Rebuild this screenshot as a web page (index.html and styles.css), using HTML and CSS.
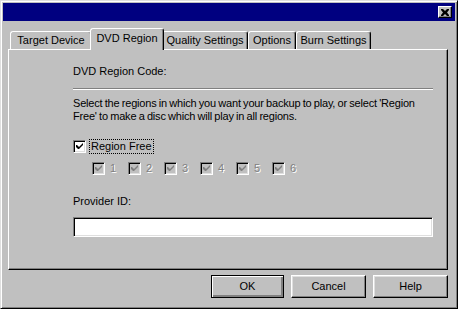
FILE: index.html
```html
<!DOCTYPE html>
<html lang="en">
<head>
    <meta charset="UTF-8">
    <title>DVD Region</title>
    <link rel="stylesheet" href="styles.css">
</head>
<body>
    <div class="window">
        <div class="titlebar">
            <button class="close" type="button" aria-label="Close">
                <svg width="8" height="7" viewBox="0 0 8 7"><path d="M0 0h2l2 2 2-2h2v1L6 3.5 8 6v1H6L4 5 2 7H0V6l2-2.5L0 1z" fill="#000"/></svg>
            </button>
        </div>

        <div class="body">
            <div class="tabs">
                <div class="tab" style="width: 82px">Target Device</div>
                <div class="tab active" style="width: 74px">DVD Region</div>
                <div class="tab" style="width: 86px">Quality Settings</div>
                <div class="tab" style="width: 48px">Options</div>
                <div class="tab" style="width: 75px">Burn Settings</div>
            </div>

            <div class="panel">
                <div class="label">DVD Region Code:</div>
                <div class="separator"></div>
                <p class="info">Select the regions in which you want your backup to play, or select 'Region<br>Free' to make a disc which will play in all regions.</p>

                <div class="check-row">
                    <span class="box"><svg width="7" height="7" viewBox="0 0 7 7"><path d="M0 2h1l2 2 4-4v2L3 6H2L0 4z" fill="#000"/></svg></span>
                    <span class="focus">Region Free</span>
                </div>

                <div class="regions">
                    <div class="region"><span class="box disabled"><svg width="7" height="7" viewBox="0 0 7 7"><path d="M0 2h1l2 2 4-4v2L3 6H2L0 4z" fill="#808080"/></svg></span><span class="dim">1</span></div>
                    <div class="region"><span class="box disabled"><svg width="7" height="7" viewBox="0 0 7 7"><path d="M0 2h1l2 2 4-4v2L3 6H2L0 4z" fill="#808080"/></svg></span><span class="dim">2</span></div>
                    <div class="region"><span class="box disabled"><svg width="7" height="7" viewBox="0 0 7 7"><path d="M0 2h1l2 2 4-4v2L3 6H2L0 4z" fill="#808080"/></svg></span><span class="dim">3</span></div>
                    <div class="region"><span class="box disabled"><svg width="7" height="7" viewBox="0 0 7 7"><path d="M0 2h1l2 2 4-4v2L3 6H2L0 4z" fill="#808080"/></svg></span><span class="dim">4</span></div>
                    <div class="region"><span class="box disabled"><svg width="7" height="7" viewBox="0 0 7 7"><path d="M0 2h1l2 2 4-4v2L3 6H2L0 4z" fill="#808080"/></svg></span><span class="dim">5</span></div>
                    <div class="region"><span class="box disabled"><svg width="7" height="7" viewBox="0 0 7 7"><path d="M0 2h1l2 2 4-4v2L3 6H2L0 4z" fill="#808080"/></svg></span><span class="dim">6</span></div>
                </div>

                <div class="label provider">Provider ID:</div>
                <input class="field" type="text">
            </div>

            <div class="buttons">
                <button class="btn default" type="button">OK</button>
                <button class="btn" type="button">Cancel</button>
                <button class="btn" type="button">Help</button>
            </div>
        </div>
    </div>
</body>
</html>
```

FILE: styles.css
```css
body {
    margin: 0;
    background: #c0c0c0;
    font-family: 'Liberation Sans', Arial, sans-serif;
    font-size: 11px;
    line-height: 13px;
    color: #000;
}

.window {
    width: 458px;
    height: 309px;
    box-sizing: border-box;
    border: 1px solid;
    border-color: #dfdfdf #000 #000 #dfdfdf;
    box-shadow: inset 1px 1px #fff, inset -1px -1px #808080;
    padding: 2px;
    background: #c0c0c0;
}

.titlebar {
    height: 18px;
    background: #000080;
    display: flex;
    align-items: center;
    justify-content: flex-end;
    padding-right: 3px;
}

.close {
    width: 14px;
    height: 12px;
    padding: 0;
    margin: 0;
    border: 1px solid;
    border-color: #fff #000 #000 #fff;
    box-shadow: inset -1px -1px #808080;
    background: #c0c0c0;
    display: flex;
    align-items: center;
    justify-content: center;
}

.body {
    padding: 0 7px 0 5px;
}

.tabs {
    display: flex;
    align-items: flex-end;
    height: 21px;
    margin-top: 7px;
    padding-left: 2px;
    position: relative;
    z-index: 1;
}

.tab {
    box-sizing: border-box;
    height: 18px;
    border: 1px solid;
    border-bottom: none;
    border-color: #fff #000 transparent #fff;
    box-shadow: inset -1px 0 #808080;
    border-radius: 3px 3px 0 0;
    background: #c0c0c0;
    text-align: center;
    padding-top: 2px;
    white-space: nowrap;
}

.tab.active {
    height: 22px;
    margin: 0 -2px -1px;
    padding-top: 3px;
    position: relative;
    z-index: 2;
}

.panel {
    height: 221px;
    box-sizing: border-box;
    border: 1px solid;
    border-color: #fff #000 #000 #fff;
    box-shadow: inset -1px -1px #808080;
    padding: 15px 14px 0 64px;
}

.separator {
    height: 0;
    border-top: 1px solid #808080;
    border-bottom: 1px solid #fff;
    margin-top: 10px;
}

.info {
    margin: 7px 0 0;
    white-space: nowrap;
    letter-spacing: -0.2px;
    word-spacing: -0.5px;
}

.check-row {
    display: flex;
    align-items: center;
    height: 15px;
    margin-top: 16px;
}

.box {
    width: 13px;
    height: 13px;
    box-sizing: border-box;
    border: 1px solid;
    border-color: #808080 #fff #fff #808080;
    box-shadow: inset 1px 1px #000, inset -1px -1px #dfdfdf;
    background: #fff;
    display: flex;
    align-items: center;
    justify-content: center;
    flex-shrink: 0;
}

.box.disabled {
    background: #c0c0c0;
}

.focus {
    margin-left: 4px;
    padding: 0 1px;
    outline: 1px dotted #000;
    line-height: 13px;
}

.regions {
    display: flex;
    height: 15px;
    margin-top: 7px;
    padding-left: 19px;
}

.region {
    width: 36px;
    display: flex;
    align-items: center;
}

.dim {
    margin-left: 5px;
    color: #808080;
    text-shadow: 1px 1px #fff;
}

.provider {
    margin-top: 19px;
}

.field {
    display: block;
    width: 100%;
    height: 20px;
    box-sizing: border-box;
    margin: 9px 0 0;
    border: 1px solid;
    border-color: #808080 #fff #fff #808080;
    box-shadow: inset 1px 1px #000, inset -1px -1px #dfdfdf;
    background: #fff;
    padding: 0 3px;
    font: inherit;
}

.buttons {
    display: flex;
    justify-content: flex-end;
    gap: 7px;
    margin-top: 5px;
}

.btn {
    width: 75px;
    height: 23px;
    box-sizing: border-box;
    border: 1px solid;
    border-color: #fff #000 #000 #fff;
    box-shadow: inset -1px -1px #808080, inset 1px 1px #dfdfdf;
    background: #c0c0c0;
    font: inherit;
    color: #000;
    padding: 0;
}

.btn.default {
    border-color: #000;
    box-shadow: inset 1px 1px #fff, inset -1px -1px #808080, inset -2px -2px #808080;
    width: 73px;
}
```
